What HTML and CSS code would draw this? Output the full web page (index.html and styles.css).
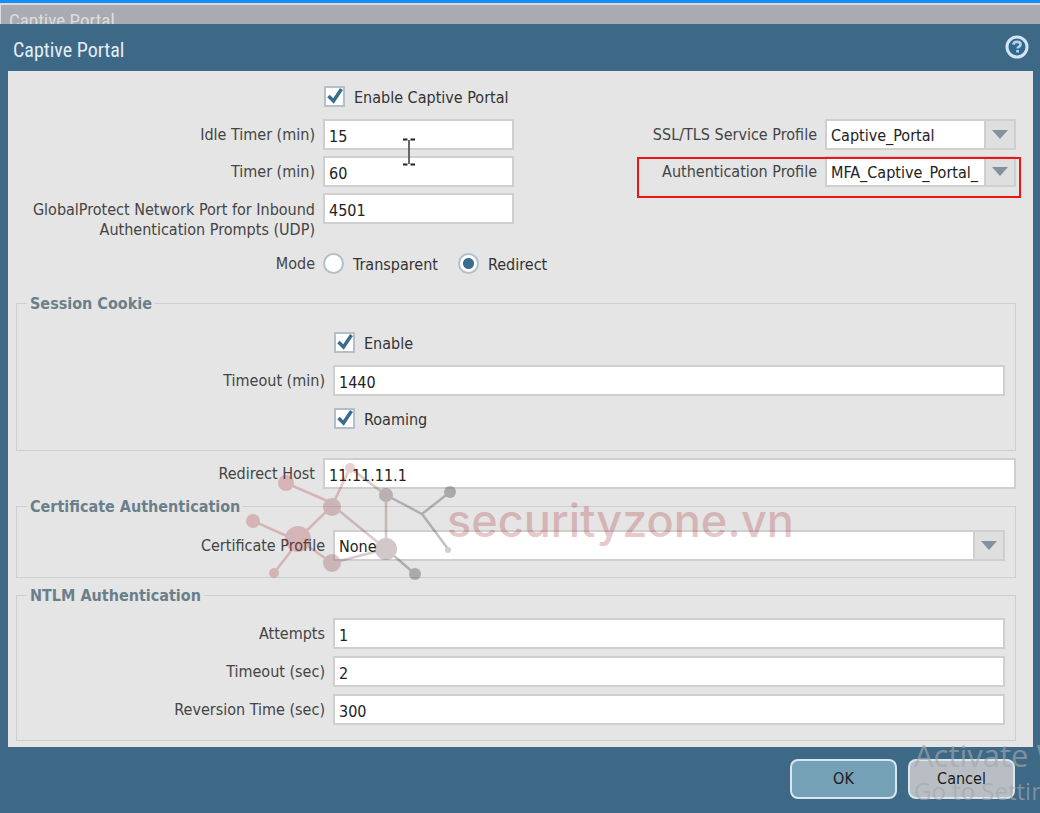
FILE: index.html
```html
<!DOCTYPE html>
<html lang="en">
  <head>
    <meta charset="UTF-8" />
    <meta name="viewport" content="width=device-width, initial-scale=1.0" />
    <title>Captive Portal</title>
    <link rel="stylesheet" href="styles.css">
  </head>
  <body>
    <div class="panel-behind">Captive Portal</div>
    <form class="dialog">
      <header class="dialog-header">
        <h1>Captive Portal</h1>
        <button type="button" class="help" aria-label="Help">
          <svg width="24" height="24" viewBox="0 0 24 24">
            <circle cx="12" cy="12" r="10" fill="#2f6a94" stroke="#d5e4f0" stroke-width="3" />
            <path d="M8.5 9.6C8.6 7.7 10 6.9 12 6.9s3.6.9 3.6 2.6c0 2.1-3 2-3 4.1" fill="none" stroke="#b9d2e4" stroke-width="2.6" />
            <rect x="11.2" y="15" width="2.8" height="2.5" fill="#b9d2e4" />
          </svg>
        </button>
      </header>

      <main class="dialog-body">
        <div class="row check-row">
          <span></span>
          <label class="choice"><input type="checkbox" checked /><span>Enable Captive Portal</span></label>
        </div>
        <div class="columns">
          <div class="stack">
            <div class="row">
              <label for="idle">Idle Timer (min)</label>
              <input type="text" id="idle" value="15" />
            </div>
            <div class="row">
              <label for="timer">Timer (min)</label>
              <input type="text" id="timer" value="60" />
            </div>
            <div class="row tall">
              <label for="port">GlobalProtect Network Port for Inbound Authentication Prompts (UDP)</label>
              <input type="text" id="port" value="4501" />
            </div>
          </div>
          <div class="stack">
            <div class="row">
              <label for="ssl">SSL/TLS Service Profile</label>
              <div class="combo">
                <select id="ssl"><option>Captive_Portal</option></select>
                <span class="trigger"><svg width="16" height="9" viewBox="0 0 16 9"><path d="M0 0h16L8 9z" fill="#82929e" /></svg></span>
              </div>
            </div>
            <div class="row highlight">
              <label for="auth">Authentication Profile</label>
              <div class="combo">
                <select id="auth"><option>MFA_Captive_Portal_</option></select>
                <span class="trigger"><svg width="16" height="9" viewBox="0 0 16 9"><path d="M0 0h16L8 9z" fill="#82929e" /></svg></span>
              </div>
            </div>
          </div>
        </div>
        <div class="row mode" role="radiogroup" aria-labelledby="mode">
          <span class="caption" id="mode">Mode</span>
          <div class="choices">
            <label class="choice"><input type="radio" name="mode" /><span>Transparent</span></label>
            <label class="choice"><input type="radio" name="mode" checked /><span>Redirect</span></label>
          </div>
        </div>

        <fieldset>
          <legend>Session Cookie</legend>
          <div class="row">
            <span></span>
            <label class="choice"><input type="checkbox" checked /><span>Enable</span></label>
          </div>
          <div class="row">
            <label for="timeout">Timeout (min)</label>
            <input type="text" id="timeout" value="1440" />
          </div>
          <div class="row">
            <span></span>
            <label class="choice"><input type="checkbox" checked /><span>Roaming</span></label>
          </div>
        </fieldset>

        <div class="row host">
          <label for="host">Redirect Host</label>
          <input type="text" id="host" value="11.11.11.1" />
        </div>

        <fieldset>
          <legend>Certificate Authentication</legend>
          <div class="row">
            <label for="cert">Certificate Profile</label>
            <div class="combo">
              <select id="cert"><option>None</option></select>
              <span class="trigger"><svg width="16" height="9" viewBox="0 0 16 9"><path d="M0 0h16L8 9z" fill="#82929e" /></svg></span>
            </div>
          </div>
        </fieldset>

        <fieldset>
          <legend>NTLM Authentication</legend>
          <div class="row">
            <label for="attempts">Attempts</label>
            <input type="text" id="attempts" value="1" />
          </div>
          <div class="row">
            <label for="ntlm-timeout">Timeout (sec)</label>
            <input type="text" id="ntlm-timeout" value="2" />
          </div>
          <div class="row">
            <label for="reversion">Reversion Time (sec)</label>
            <input type="text" id="reversion" value="300" />
          </div>
        </fieldset>
      </main>

      <footer class="dialog-footer">
        <button type="button" class="button ok">OK</button>
        <button type="button" class="button cancel">Cancel</button>
      </footer>
    </form>

    <svg class="cursor" width="14" height="28" viewBox="0 0 14 28">
      <path d="M1 1.5h4.5M8.5 1.5H13M1 26.5h4.5M8.5 26.5H13" stroke="#222" stroke-width="2" />
      <path d="M7 2v24" stroke="#666" stroke-width="2" />
    </svg>

    <div class="brand">
      <svg width="216" height="124" viewBox="0 0 216 124">
        <g stroke-width="2.5">
          <g stroke="#a8272d">
            <path d="M46 24L92 44M92 47L110 9M13 62L58 82M58 80L92 47M58 83L34 114M58 80L92 104" />
          </g>
          <g stroke="#703038">
            <path d="M110 9L146 36M92 46L146 90M92 104L146 90M146 36V90" />
          </g>
          <path d="M146 36L182 55L210 33M182 55L208 90M146 90L175 115" fill="none" stroke="#111" />
        </g>
        <circle cx="46" cy="24" r="8" fill="#a8272d" />
        <circle cx="110" cy="9" r="5" fill="#a8484c" />
        <circle cx="13" cy="62" r="7" fill="#a8272d" />
        <circle cx="92" cy="48" r="9" fill="#802a30" />
        <circle cx="58" cy="80" r="13" fill="#a8272d" />
        <circle cx="34" cy="114" r="5" fill="#a8272d" />
        <circle cx="92" cy="104" r="9" fill="#802a30" />
        <circle cx="146" cy="36" r="7" fill="#401418" />
        <circle cx="146" cy="90" r="11" fill="#502a2c" />
        <circle cx="210" cy="33" r="6" fill="#000" />
        <circle cx="208" cy="91" r="3" fill="#444" />
        <circle cx="175" cy="115" r="6" fill="#000" />
      </svg>
      <span>securityzone.vn</span>
    </div>

    <div class="activate">
      <p>Activate Windows</p>
      <p class="small">Go to Settings</p>
    </div>
  </body>
</html>
```
FILE: styles.css
```css
* {
  --frame: #3d6986;
  --face: #e5e5e5;
  --line: #cdcfd0;
  --text: #444;
  box-sizing: border-box;
}
body {
  position: relative;
  margin: 0;
  min-height: 100vh;
  display: flex;
  flex-direction: column;
  overflow: hidden;
  font: 16px/20px "DejaVu Sans Condensed", "DejaVu Sans", sans-serif;
  color: var(--text);
  background: var(--frame);
}
.panel-behind {
  height: 24px;
  padding: 6px 9px 0;
  overflow: hidden;
  border-top: 3px solid #1490f5;
  background: #a9abb0;
  box-shadow: inset 1px 2px #d8dcde;
  color: #dcdcdf;
  font: 19px/24px "Roboto Condensed", Roboto, sans-serif;
}
.dialog {
  flex: 1;
  display: flex;
  flex-direction: column;
}
.dialog-header {
  display: flex;
  justify-content: space-between;
  align-items: center;
  height: 47px;
  padding: 3px 11px 0 13px;
}
h1 {
  margin: 2px 0 0;
  font: 20px/28px "Roboto Condensed", Roboto, sans-serif;
  color: #e4eef4;
}
.help {
  padding: 0;
  border: 0;
  background: none;
  height: 28px;
}
.dialog-body {
  margin: 0 7px 0 8px;
  padding: 10px 17px 6px 8px;
  background: var(--face);
}
.columns {
  display: grid;
  grid-template-columns: 1fr 1fr;
  gap: 4px;
}
.stack {
  display: flex;
  flex-direction: column;
  gap: 6px;
}
.row {
  position: relative;
  display: grid;
  grid-template-columns: 299px 1fr;
  column-gap: 8px;
  align-items: center;
  min-height: 31px;
}
.row > label:first-child,
.caption {
  text-align: right;
}
.check-row {
  margin-bottom: 7px;
}
.tall {
  align-items: start;
}
.tall label {
  padding-top: 7px;
}
.mode {
  margin-top: 8px;
}
.choices {
  display: flex;
  gap: 20px;
}
.choice {
  display: flex;
  align-items: center;
  gap: 9px;
  color: #333;
}
.choice span {
  padding-top: 2px;
}
input,
select,
button {
  font: inherit;
}
input[type="text"],
.combo {
  width: 100%;
  min-width: 0;
  height: 31px;
  border: 2px solid var(--line);
  background: #fff;
  color: #222;
}
input[type="text"] {
  padding: 3px 4px 0;
}
.combo {
  display: flex;
}
select {
  flex: 1;
  min-width: 0;
  appearance: none;
  padding: 3px 4px 0;
  border: 0;
  background: none;
  color: #222;
}
.trigger {
  display: flex;
  align-items: center;
  justify-content: center;
  width: 30px;
  border-left: 2px solid var(--line);
  background: #dfdfdf;
}
input[type="checkbox"],
input[type="radio"] {
  appearance: none;
  flex: none;
  width: 21px;
  height: 21px;
  margin: 0 0 0 1px;
  border: 2px solid #b4c0c9;
  background: #fff;
}
input[type="checkbox"] {
  background: #fff url("data:image/svg+xml,%3Csvg xmlns='http://www.w3.org/2000/svg' viewBox='0 0 17 17'%3E%3Cpath d='M2.5 8L7.5 13L15.5 1' fill='none' stroke='%233a6c8e' stroke-width='3.5'/%3E%3C/svg%3E") center / 17px;
}
input[type="radio"] {
  margin-left: 0;
  border-radius: 50%;
}
input[type="radio"]:checked {
  background: radial-gradient(circle, #3a6c8e 5px, #fff 6px);
}
/* outline around the row that has to be changed */
.highlight::after {
  content: "";
  position: absolute;
  inset: 1px -5px -11px 119px;
  border: 2px solid #f01414;
  pointer-events: none;
}
fieldset {
  display: flex;
  flex-direction: column;
  gap: 7px;
  min-width: 0;
  margin: 6px 0 0;
  padding: 13px 10px 16px 9px;
  border: 1px solid var(--line);
}
fieldset:last-of-type {
  padding: 12px 10px 15px 9px;
}
legend {
  margin-left: 1px;
  padding: 2px 3px 0;
  font-weight: bold;
  color: #6b7f8b;
}
.mode + fieldset {
  margin-top: 13px;
}
.host {
  margin-top: 7px;
}
.dialog-footer {
  display: flex;
  justify-content: flex-end;
  gap: 11px;
  padding: 12px 25px 14px;
}
.button {
  width: 107px;
  height: 40px;
  border: 2px solid #d9e6ee;
  border-radius: 8px;
  color: #1c1c1c;
}
.ok {
  background: #75a1b7;
}
.cancel {
  background: #b9bdc4;
}
.cursor {
  position: absolute;
  left: 402px;
  top: 138px;
}
.brand {
  position: absolute;
  left: 240px;
  top: 459px;
  display: flex;
  align-items: center;
  opacity: 0.25;
  pointer-events: none;
}
.brand span {
  margin-left: -9px;
  font: 500 45px/48px Inter, sans-serif;
  color: #a8272d;
}
.activate {
  position: absolute;
  right: 0;
  bottom: 6px;
  width: 126px;
  overflow: hidden;
  white-space: nowrap;
  color: rgba(165, 168, 172, 0.65);
  font: 31px/40px "Open Sans", sans-serif;
  pointer-events: none;
}
.activate p {
  margin: 0;
}
.activate .small {
  font-size: 24px;
  line-height: 32px;
}
```
